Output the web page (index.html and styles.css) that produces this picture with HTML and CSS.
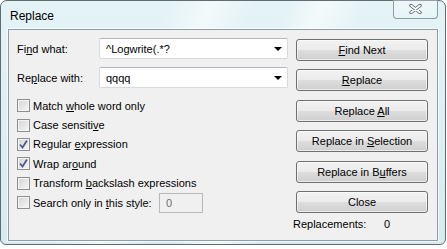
FILE: index.html
```html
<!DOCTYPE html>
<html lang="en">
<head>
  <meta charset="UTF-8">
  <title>Replace</title>
  <link rel="stylesheet" href="styles.css">
</head>
<body>
  <div class="window">
    <div class="titlebar">
      <span class="title">Replace</span>
      <div class="close-btn">
        <svg width="13" height="10" viewBox="0 0 13 10">
          <path d="M2 1.5 L11 8.5 M11 1.5 L2 8.5" stroke="#5b6467" stroke-width="3.4" stroke-linecap="round"/>
          <path d="M2 1.5 L11 8.5 M11 1.5 L2 8.5" stroke="#ffffff" stroke-width="1.6" stroke-linecap="round"/>
        </svg>
      </div>
    </div>

    <div class="client">
      <div class="left">
        <div class="field">
          <label>Fi<u>n</u>d what:</label>
          <div class="combo"><span>^Logwrite(.*?</span><i class="arrow"></i></div>
        </div>
        <div class="field">
          <label>Re<u>p</u>lace with:</label>
          <div class="combo"><span>qqqq</span><i class="arrow"></i></div>
        </div>

        <div class="options">
          <div class="opt"><span class="cb"></span><span>Match <u>w</u>hole word only</span></div>
          <div class="opt"><span class="cb"></span><span>Case sensiti<u>v</u>e</span></div>
          <div class="opt"><span class="cb checked"><svg width="9" height="9" viewBox="0 0 9 9"><path d="M1 4.5 L3.5 7.5 L8 0.5" fill="none" stroke="#4a5c8c" stroke-width="1.8"/></svg></span><span>Regular <u>e</u>xpression</span></div>
          <div class="opt"><span class="cb checked"><svg width="9" height="9" viewBox="0 0 9 9"><path d="M1 4.5 L3.5 7.5 L8 0.5" fill="none" stroke="#4a5c8c" stroke-width="1.8"/></svg></span><span>Wrap ar<u>o</u>und</span></div>
          <div class="opt"><span class="cb"></span><span>Transform <u>b</u>ackslash expressions</span></div>
          <div class="opt"><span class="cb"></span><span class="style-label">Search only in <u>t</u>his style:</span><span class="small-input">0</span></div>
        </div>
      </div>

      <div class="right">
        <div class="btn"><span><u>F</u>ind Next</span></div>
        <div class="btn"><span><u>R</u>eplace</span></div>
        <div class="btn"><span>Replace <u>A</u>ll</span></div>
        <div class="btn"><span>Replace in <u>S</u>election</span></div>
        <div class="btn"><span>Replace in B<u>u</u>ffers</span></div>
        <div class="btn"><span>Close</span></div>
        <div class="count"><span class="count-label">Replacements:</span><span>0</span></div>
      </div>
    </div>
  </div>
</body>
</html>
```

FILE: styles.css
```css
body {
  margin: 0;
  background: #ffffff;
  font-family: "Liberation Sans", Arial, sans-serif;
  font-size: 11px;
  color: #000;
}

.window {
  width: 446px;
  height: 245px;
  box-sizing: border-box;
  border: 1px solid #5f6d72;
  border-radius: 7px 7px 6px 6px;
  padding: 0 7px 3px 7px;
  display: flex;
  flex-direction: column;
  background:
    linear-gradient(115deg, rgba(255,255,255,0) 30%, rgba(255,255,255,0.55) 38%, rgba(255,255,255,0) 46%,
      rgba(255,255,255,0) 52%, rgba(255,255,255,0.6) 58%, rgba(255,255,255,0) 66%),
    linear-gradient(180deg, #e4f3f6, #d6ebf0);
}

.titlebar {
  height: 28px;
  display: flex;
  justify-content: space-between;
  align-items: flex-start;
}

.title {
  padding: 8px 0 0 2px;
  font-size: 12px;
  color: #000;
}

.close-btn {
  width: 45px;
  height: 19px;
  margin-top: -1px;
  box-sizing: border-box;
  border: 1px solid #8b9ca2;
  border-top: none;
  border-radius: 0 0 4px 4px;
  background: linear-gradient(180deg, rgba(255,255,255,0.35), rgba(255,255,255,0.15));
  display: flex;
  justify-content: center;
  align-items: center;
}

.client {
  flex: 1;
  border: 1px solid #8d9fa6;
  box-shadow: 0 0 0 1px rgba(255,255,255,0.7);
  background: #f0f0f0;
  display: flex;
  gap: 8px;
  padding: 8px 9px 0 8px;
}

.left {
  width: 271px;
}

.field {
  display: flex;
  align-items: center;
  height: 21px;
  margin-bottom: 8px;
}

.field label {
  width: 82px;
}

.combo {
  flex: 1;
  height: 21px;
  box-sizing: border-box;
  background: #fff;
  border: 1px solid #d6d9de;
  border-top-color: #b3b7be;
  border-radius: 2px;
  display: flex;
  align-items: center;
  justify-content: space-between;
  padding: 0 5px 0 6px;
}

.arrow {
  width: 0;
  height: 0;
  border-left: 4px solid transparent;
  border-right: 4px solid transparent;
  border-top: 4px solid #000;
}

.options {
  margin-top: 6px;
}

.opt {
  height: 19.4px;
  display: flex;
  align-items: center;
}

.cb {
  width: 13px;
  height: 13px;
  box-sizing: border-box;
  border: 1px solid #8e8f8f;
  background: linear-gradient(135deg, #d4d4d4, #f7f7f7);
  box-shadow: inset 0 0 0 1px #f4f4f4;
  margin-right: 3px;
  display: flex;
  align-items: center;
  justify-content: center;
}

.style-label {
  width: 126px;
}

.small-input {
  width: 44px;
  height: 20px;
  box-sizing: border-box;
  border: 1px solid #b5b9bd;
  background: #f0f0f0;
  color: #6d6d6d;
  padding-left: 6px;
  display: flex;
  align-items: center;
}

.right {
  width: 132px;
  display: flex;
  flex-direction: column;
}

.btn {
  height: 22px;
  box-sizing: border-box;
  margin: 1px 0 7.4px;
  border: 1px solid #707070;
  border-radius: 3px;
  background: linear-gradient(180deg, #f2f2f2 0%, #ebebeb 48%, #dddddd 52%, #cfcfcf 100%);
  box-shadow: inset 0 0 0 1px rgba(255,255,255,0.6);
  display: flex;
  align-items: center;
  justify-content: center;
}

.count {
  display: flex;
  margin: -2px 0 0 -3px;
}

.count-label {
  width: 91px;
}
```
